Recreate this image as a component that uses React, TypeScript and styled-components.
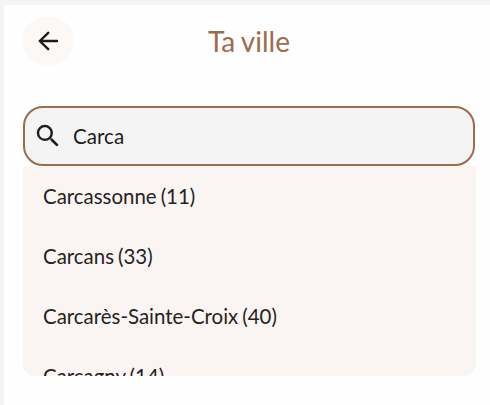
import React, { useState } from "react";
import styled, { createGlobalStyle } from "styled-components";

const GlobalStyle = createGlobalStyle`
  * { box-sizing: border-box; }
  body {
    margin: 0;
    overflow: hidden;
    background: #f4f4f7;
    font-family: Lato, sans-serif;
  }
`;

const Page = styled.div`
  height: 405px;
  padding: 5px 0 0 4px;
`;

const Screen = styled.main`
  height: 400px;
  padding: 11px 14px 0 19px;
  background: #fefefe;
`;

const Header = styled.header`
  display: grid;
  grid-template-columns: 50px 1fr 51px;
  align-items: center;
  height: 50px;
`;

const BackButton = styled.button`
  display: flex;
  align-items: center;
  justify-content: center;
  width: 50px;
  height: 48px;
  padding: 0;
  border: 0;
  border-radius: 22px;
  background: #fcf8f5;
  color: #1f1a17;
`;

const Title = styled.h1`
  margin: 0;
  color: #9c6b50;
  font-size: 28px;
  font-weight: 400;
  line-height: 32px;
  text-align: center;
  word-spacing: -1px;
`;

const SearchField = styled.label`
  display: flex;
  align-items: center;
  gap: 10px;
  width: 452px;
  height: 60px;
  margin-top: 40px;
  padding-left: 8px;
  border: 2px solid #9c6b50;
  border-radius: 20px;
  background: #f4f4f5;
  color: #211d1c;
`;

const SearchInput = styled.input`
  flex: 1;
  min-width: 0;
  padding: 0;
  border: 0;
  outline: 0;
  background: transparent;
  color: #211d1c;
  font: 400 20.6px/24px Lato, sans-serif;
`;

const Results = styled.ul`
  width: 453px;
  height: 210px;
  margin: 0;
  padding: 0;
  overflow: hidden;
  list-style: none;
  border-radius: 0 0 12px 12px;
  background: #faf5f2;
`;

const Result = styled.li`
  display: flex;
  align-items: center;
  height: 60px;
  padding: 0 20px;
  color: #26221f;
  font-size: 20.45px;
  line-height: 24px;
  word-spacing: -1.2px;
`;

const cities = [
  "Carcassonne (11)",
  "Carcans (33)",
  "Carcarès-Sainte-Croix (40)",
  "Carcagny (14)",
];

export default function App() {
  const [query, setQuery] = useState("Carca");
  return (
    <Page>
      <GlobalStyle />
      <Screen>
        <Header>
          <BackButton aria-label="Retour">
            <svg width="22" height="22" viewBox="0 0 22 22" fill="none" stroke="currentColor" strokeWidth="2.4" strokeLinecap="round" strokeLinejoin="round">
              <path d="M20 11H2.8M11.2 2.8L2.8 11L11.2 19.2" />
            </svg>
          </BackButton>
          <Title>Ta ville</Title>
        </Header>
        <SearchField>
          <svg width="30" height="30" viewBox="0 0 24 24" fill="currentColor">
            <path d="M15.5 14h-.79l-.28-.27A6.47 6.47 0 0 0 16 9.5 6.5 6.5 0 1 0 9.5 16c1.61 0 3.09-.59 4.23-1.57l.27.28v.79l5 4.99L20.49 19l-4.99-5zm-6 0C7.01 14 5 11.99 5 9.5S7.01 5 9.5 5 14 7.01 14 9.5 11.99 14 9.5 14z" />
          </svg>
          <SearchInput aria-label="Ta ville" value={query} onChange={(e) => setQuery(e.target.value)} />
        </SearchField>
        <Results>
          {cities.map((city) => (
            <Result key={city}>{city}</Result>
          ))}
        </Results>
      </Screen>
    </Page>
  );
}
